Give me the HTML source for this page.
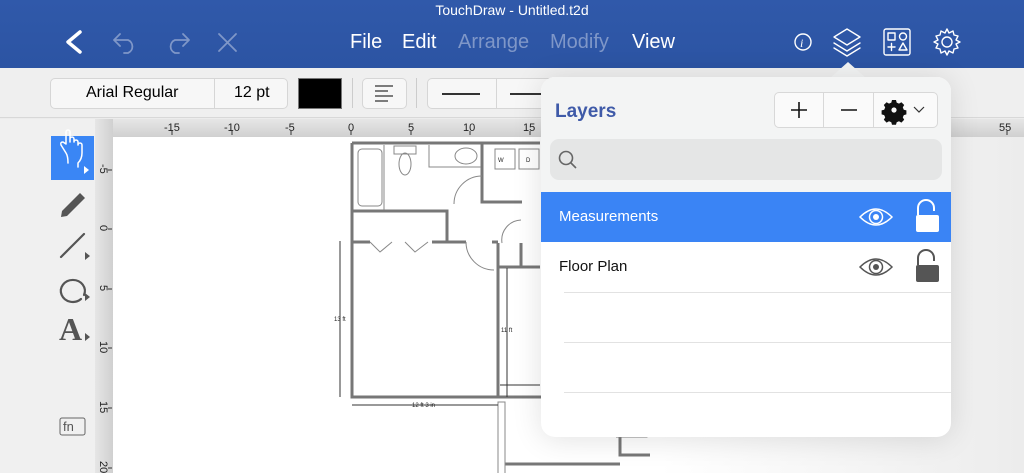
<!DOCTYPE html>
<html><head><meta charset="utf-8"><style>
*{margin:0;padding:0;box-sizing:border-box}
body{width:1024px;height:473px;overflow:hidden;position:relative;font-family:"Liberation Sans",Arial,sans-serif;background:#ececec}
.top{position:absolute;left:0;top:0;width:1024px;height:68px;background:linear-gradient(#3059aa,#2c54a3)}
.title{position:absolute;top:2px;width:100%;text-align:center;color:#fff;font-size:14px}
.menu{position:absolute;top:31px;font-size:20px;color:#fff}
.dim{color:#7f97c8}
.tb{position:absolute;left:0;top:68px;width:1024px;height:50px;background:#efefef;border-bottom:1px solid #d8d8d8}
.box{position:absolute;background:#f7f7f7;border:1px solid #d6d6d6;border-radius:5px}
.left{position:absolute;left:0;top:119px;width:95px;height:354px;background:#f0f0f0}
.pop{position:absolute;left:541px;top:77px;width:410px;height:360px;background:#fff;border-radius:14px;overflow:hidden;box-shadow:0 2px 30px rgba(0,0,0,.12)}
</style></head><body>
<div class="top">
<div class="title">TouchDraw - Untitled.t2d</div>
<svg style="position:absolute;left:0;top:0" width="1024" height="68" fill="none" stroke-linecap="round" stroke-linejoin="round">
<path d="M80 32 L68 42 L80 52" stroke="#fff" stroke-width="3.5"/>
<g stroke="#7f97c8" stroke-width="1.8">
<path d="M120 34 L114 40 L120 46 M114 40 H128 a7 7 0 0 1 0 13 H124"/>
<path d="M183 34 L189 40 L183 46 M189 40 H175 a7 7 0 0 0 0 13 H179"/>
<path d="M219 34 L236 51 M236 34 L219 51"/>
</g>
<g stroke="#fff" stroke-width="1.4">
<circle cx="803" cy="42" r="8"/>
<path d="M847 29 L860 37 L847 45 L834 37 Z M834 43 L847 51 L860 43 M834 48 L847 56 L860 48"/>
<rect x="884" y="29" width="26" height="26" rx="2"/>
<rect x="888" y="33" width="7" height="7"/><circle cx="903" cy="36.5" r="3.5"/>
<path d="M888 47 h7 M891.5 43.5 v7 M899 50 l4 -7 l4 7 z"/>
<circle cx="947" cy="42" r="5"/>
<path d="M947 29 l2 4 4 -2 1 4 4 1 -2 4 4 2 -4 2 2 4 -4 1 -1 4 -4 -2 -2 4 -2 -4 -4 2 -1 -4 -4 -1 2 -4 -4 -2 4 -2 -2 -4 4 -1 1 -4 4 2 z"/>
</g>
<text x="800" y="47" fill="#fff" font-size="12" font-style="italic" font-family="Liberation Serif">i</text>
</svg>
<div class="menu" style="left:350px">File</div>
<div class="menu" style="left:402px">Edit</div>
<div class="menu dim" style="left:458px">Arrange</div>
<div class="menu dim" style="left:550px">Modify</div>
<div class="menu" style="left:632px">View</div>
</div>
<div class="tb">
<div class="box" style="left:50px;top:10px;width:238px;height:31px"></div>
<div style="position:absolute;left:214px;top:10px;width:1px;height:31px;background:#d6d6d6"></div>
<div style="position:absolute;left:86px;top:16px;font-size:16px">Arial Regular</div>
<div style="position:absolute;left:234px;top:16px;font-size:16px">12 pt</div>
<div style="position:absolute;left:298px;top:10px;width:44px;height:31px;background:#000;border:1px solid #777"></div>
<div style="position:absolute;left:352px;top:10px;width:1px;height:30px;background:#ccc"></div>
<div class="box" style="left:362px;top:10px;width:45px;height:31px"></div>
<svg style="position:absolute;left:374px;top:16px" width="20" height="20" stroke="#333" stroke-width="1.2"><path d="M1 2h18M1 7h13M1 12h18M1 17h13"/></svg>
<div style="position:absolute;left:416px;top:10px;width:1px;height:30px;background:#ccc"></div>
<div class="box" style="left:427px;top:10px;width:130px;height:31px"></div>
<div style="position:absolute;left:496px;top:10px;width:1px;height:31px;background:#d6d6d6"></div>
<div style="position:absolute;left:442px;top:25px;width:38px;height:1.5px;background:#333"></div>
<div style="position:absolute;left:510px;top:25px;width:38px;height:1.5px;background:#333"></div>
</div>
<div class="left">
<div style="position:absolute;left:51px;top:17px;width:43px;height:44px;background:#3a86f5"></div>
<svg style="position:absolute;left:0;top:0" width="95" height="354" fill="none" stroke-linecap="round" stroke-linejoin="round">
<path d="M66 25 v-12 a2 2 0 0 1 4 0 v10 v-3 a2 2 0 0 1 4 0 v3 a2 2 0 0 1 4 0 v3 a2 2 0 0 1 4 0 v8 q0 6 -4 10 v4 M66 25 l-3 -2 q-3 0 -2 3 l5 8 q2 3 2 10" stroke="#fff" stroke-width="1.5"/>
<path d="M84 47 l5 4 -5 4 z" fill="#fff"/>
<path d="M62 92 L80 74 L85 79 L67 97 L61 98 Z" fill="#555"/>
<path d="M61 138 L84 115" stroke="#555" stroke-width="2.2"/>
<path d="M85 133 l5 4 -5 4 z M85 174 l5 4 -5 4 z M85 214 l5 4 -5 4 z" fill="#555"/>
<path d="M84 176 a12 11 0 1 0 -3 4" stroke="#555" stroke-width="2.2"/>
<rect x="60" y="299" width="25" height="17" rx="2" stroke="#666" stroke-width="1"/>
</svg>
<div style="position:absolute;left:59px;top:192px;font-family:'Liberation Serif';font-weight:bold;font-size:32px;color:#555">A</div>
<div style="position:absolute;left:63px;top:300px;font-size:13px;color:#555">fn</div>
</div>
<div style="position:absolute;left:95px;top:119px;width:929px;height:18px;background:linear-gradient(#e6e6e6,#d0d0d0)"></div>
<div style="position:absolute;left:95px;top:119px;width:18px;height:354px;background:linear-gradient(90deg,#e6e6e6,#d0d0d0)"></div>
<div style="position:absolute;left:113px;top:137px;width:911px;height:336px;background:linear-gradient(90deg,#fff 0%,#fff 60%,#ececec 100%)"></div>
<svg style="position:absolute;left:0;top:0" width="1024" height="473" font-family="Liberation Sans" font-size="11" fill="#222">
<g stroke="#333" stroke-width="1">
<path d="M172 131v4M232 131v4M291 131v4M351 131v4M411 131v4M470 131v4M530 131v4M1007 131v4"/>
<path d="M108 170h4M108 229h4M108 289h4M108 348h4M108 408h4M108 468h4"/>
</g>
<text x="164" y="131">-15</text><text x="224" y="131">-10</text><text x="285" y="131">-5</text><text x="348" y="131">0</text><text x="408" y="131">5</text><text x="463" y="131">10</text><text x="523" y="131">15</text><text x="999" y="131">55</text>
<g transform="rotate(90)"><text x="164" y="-100">-5</text><text x="225" y="-100">0</text><text x="285" y="-100">5</text><text x="341" y="-100">10</text><text x="401" y="-100">15</text><text x="461" y="-100">20</text></g>
<g fill="none" stroke="#777" stroke-width="3">
<path d="M352 143 H540 M352 143 V397 H620 M352 211 H447 V243 M352 242 H370 M432 242 H447 M447 242 H466 M482 143 V202 H522 M498 243 V397 M498 242 H492 M498 267 H540 M521 243 V267"/>
<path d="M620 397 V455 H650 M505 464 H620"/>
</g>
<g fill="none" stroke="#888" stroke-width="1">
<rect x="358" y="149" width="24" height="57" rx="4"/><path d="M384 145 V210"/>
<rect x="394" y="146" width="22" height="8"/><ellipse cx="405" cy="164" rx="6" ry="11"/>
<path d="M429 145 V167 H481"/><ellipse cx="466" cy="156" rx="11" ry="8"/>
<rect x="495" y="149" width="20" height="20"/><rect x="519" y="149" width="20" height="20"/>
<path d="M370 242 L380 252 L392 242 M405 242 L415 252 L428 242"/>
<path d="M482 176 A28 28 0 0 0 454 204 M466 242 A28 28 0 0 0 494 270 M502 243 A20 20 0 0 1 521 220 M498 474 V402 H505 V474 M616 437 H647 A14 14 0 0 0 645 423"/>
</g>
<g stroke="#333" stroke-width="1"><path d="M340 241 V397 M507 268 V397 M352 405 H498 M500 385 H540"/></g>
<g font-size="6"><text x="334" y="321">13 ft</text><text x="501" y="332">11 ft</text><text x="412" y="407">12 ft 3 in</text><text x="498" y="162">W</text><text x="526" y="162">D</text></g>
</svg>
<svg style="position:absolute;left:830px;top:62px" width="36" height="16"><path d="M0 16 L18 0 L36 16 Z" fill="#f3f4f4"/></svg>
<div class="pop">
<div style="position:absolute;left:0;top:0;width:410px;height:115px;background:#f3f4f4"></div>
<div style="position:absolute;left:14px;top:24px;font-size:19px;font-weight:bold;color:#3f5aa8">Layers</div>
<div style="position:absolute;left:233px;top:15px;width:164px;height:36px;background:#fafafa;border:1px solid #d8d8d8;border-radius:5px"></div>
<div style="position:absolute;left:282px;top:15px;width:1px;height:36px;background:#d8d8d8"></div>
<div style="position:absolute;left:332px;top:15px;width:1px;height:36px;background:#d8d8d8"></div>
<svg style="position:absolute;left:233px;top:15px" width="164" height="36" stroke="#111" stroke-width="1.6" fill="none">
<path d="M25 10v16M17 18h16M67 18h16"/>
<path d="M118 8h4l.7 2.6 2.3 1 2.4-1.4 2.8 2.8-1.4 2.4 1 2.3 2.6.7v4l-2.6.7-1 2.3 1.4 2.4-2.8 2.8-2.4-1.4-2.3 1-.7 2.6h-4l-.7-2.6-2.3-1-2.4 1.4-2.8-2.8 1.4-2.4-1-2.3-2.6-.7v-4l2.6-.7 1-2.3-1.4-2.4 2.8-2.8 2.4 1.4 2.3-1z" fill="#111" stroke="none"/>
<circle cx="120" cy="18" r="2.6" fill="#fafafa" stroke="none"/>
<path d="M140 15l5 5 5-5" stroke-width="1.2" stroke="#333"/>
</svg>
<div style="position:absolute;left:9px;top:62px;width:392px;height:41px;background:#e5e6e6;border-radius:9px"></div>
<svg style="position:absolute;left:17px;top:73px" width="20" height="20" fill="none" stroke="#666" stroke-width="1.6"><circle cx="8" cy="8" r="6.5"/><path d="M13 13l5 5"/></svg>
<div style="position:absolute;left:0;top:115px;width:410px;height:50px;background:#3a84f5"></div>
<div style="position:absolute;left:18px;top:131px;font-size:15px;color:#fff">Measurements</div>
<div style="position:absolute;left:18px;top:181px;font-size:15px;color:#111">Floor Plan</div>
<div style="position:absolute;left:23px;top:215px;width:387px;height:1px;background:#e2e2e2"></div>
<div style="position:absolute;left:23px;top:265px;width:387px;height:1px;background:#e2e2e2"></div>
<div style="position:absolute;left:23px;top:315px;width:387px;height:1px;background:#e2e2e2"></div>
<svg style="position:absolute;left:0;top:115px" width="410" height="100" fill="none">
<g stroke="#fff" stroke-width="1.5"><path d="M319 25 Q335 9 351 25 Q335 41 319 25 Z"/><circle cx="335" cy="25" r="6.5"/></g><circle cx="335" cy="25" r="3" fill="#fff"/>
<path d="M377 23 V16 a8 8 0 0 1 16 0 V19" stroke="#fff" stroke-width="2"/><rect x="375" y="23" width="23" height="17" rx="2" fill="#fff"/>
<g stroke="#555" stroke-width="1.5"><path d="M319 75 Q335 59 351 75 Q335 91 319 75 Z"/><circle cx="335" cy="75" r="6.5"/></g><circle cx="335" cy="75" r="3" fill="#555"/>
<path d="M377 73 V66 a8 8 0 0 1 16 0 V69" stroke="#555" stroke-width="2"/><rect x="375" y="73" width="23" height="17" rx="2" fill="#555"/>
</svg>
</div>
</body></html>
